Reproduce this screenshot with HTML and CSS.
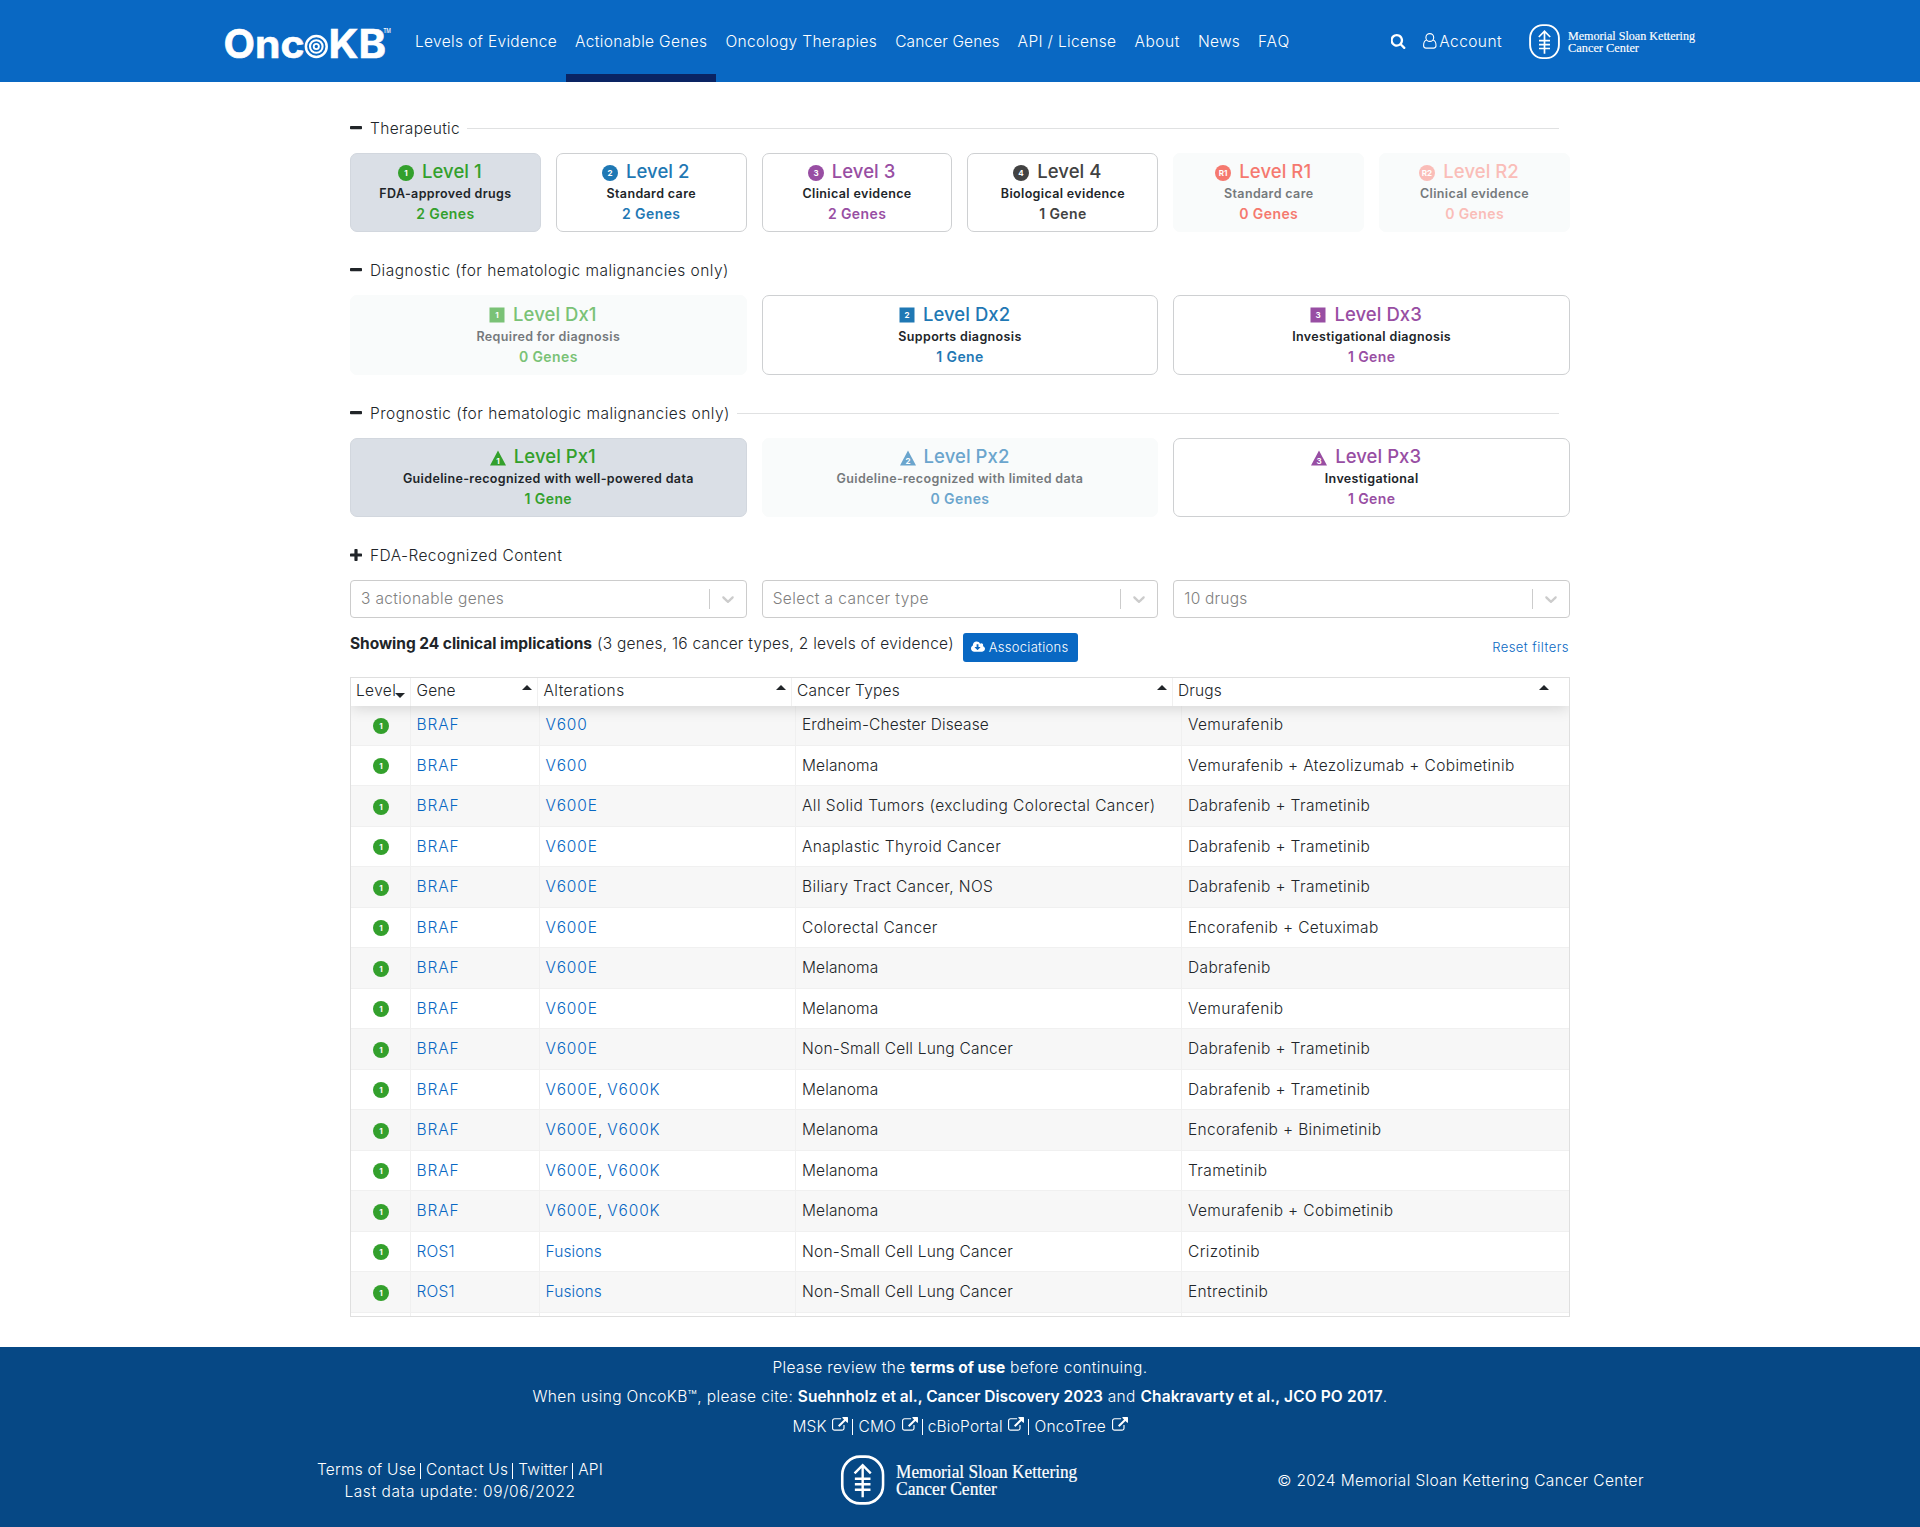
FILE: index.html
```html
<!DOCTYPE html>
<html lang="en">
<head>
<meta charset="utf-8">
<title>OncoKB Actionable Genes</title>
<link rel="stylesheet" href="styles.css">
</head>
<body>
<svg class="defs" width="0" height="0">
  <symbol id="seal" viewBox="0 0 31 36">
    <rect x="1.1" y="1.1" width="28.8" height="33" rx="12.5" ry="13" fill="none" stroke="#fff" stroke-width="1.9"/>
    <path d="M15.5 29.7V7.5M9.8 13l5.7-5.8 5.7 5.8M10 16.7h11M10 20.6h11M10 24.5h11" fill="none" stroke="#fff" stroke-width="1.7"/>
  </symbol>
  <symbol id="ext" viewBox="0 0 1792 1792"><path d="M1408 928v320q0 119-84.500 203.500t-203.500 84.500h-832q-119 0-203.500-84.500t-84.500-203.500v-832q0-119 84.500-203.500t203.500-84.500h704q14 0 23 9t9 23v64q0 14-9 23t-23 9h-704q-66 0-113 47t-47 113v832q0 66 47 113t113 47h832q66 0 113-47t47-113v-320q0-14 9-23t23-9h64q14 0 23 9t9 23zm384-864v512q0 26-19 45t-45 19-45-19l-176-176-652 652q-10 10-23 10t-23-10l-114-114q-10-10-10-23t10-23l652-652-176-176q-19-19-19-45t19-45 45-19h512q26 0 45 19t19 45z"/></symbol>
  <symbol id="minus" viewBox="0 0 12 12"><rect y="4" width="12" height="3.2" rx="0.8"/></symbol>
  <symbol id="plus" viewBox="0 0 12 12"><path d="M.7 4.400h3.700V.7a.7.7 0 0 1 .7-.7h1.800a.7.7 0 0 1 .7.7v3.700h3.700a.7.7 0 0 1 .7.7v1.800a.7.7 0 0 1-.7.7H7.600v3.700a.7.7 0 0 1-.7.7H5.100a.7.7 0 0 1-.7-.7V7.600H.7a.7.7 0 0 1-.7-.7V5.100a.7.7 0 0 1 .7-.7z"/></symbol>
  <symbol id="chev" viewBox="0 0 20 20"><path d="M4.516 7.548c0.436-0.446 1.043-0.481 1.576 0l3.908 3.747 3.908-3.747c0.533-0.481 1.141-0.446 1.574 0 0.436 0.445 0.408 1.197 0 1.615-0.406 0.418-4.695 4.502-4.695 4.502-0.217 0.223-0.502 0.335-0.787 0.335s-0.570-0.112-0.789-0.335c0 0-4.287-4.084-4.695-4.502s-0.436-1.170 0-1.615z"/></symbol>
</svg>

<header class="header">
  <div class="header-in">
    <svg class="logo" width="172" height="62" viewBox="-2 -15 172 62">
      <text x="-.5" y="30.500" class="logo-text" textLength="81" lengthAdjust="spacingAndGlyphs">Onc</text>
      <circle cx="92.300" cy="19.500" r="10.400" fill="none" stroke="#fff" stroke-width="2.500"/>
      <circle cx="92.300" cy="19.500" r="6.300" fill="none" stroke="#fff" stroke-width="2.100"/>
      <circle cx="92.300" cy="19.500" r="2.600" fill="none" stroke="#fff" stroke-width="1.900"/>
      <text x="104.500" y="30.500" class="logo-text" textLength="57.500" lengthAdjust="spacingAndGlyphs">KB</text>
      <text x="159.500" y="5.800" class="logo-tm" textLength="7.500" lengthAdjust="spacingAndGlyphs">TM</text>
    </svg>
    <nav class="nav">
      <a>Levels of Evidence</a><a class="active">Actionable Genes</a><a>Oncology Therapies</a><a class="ls-1">Cancer Genes</a><a class="ls-3">API / License</a><a class="ls-5">About</a><a class="ls-2">News</a><a class="ls-8">FAQ</a>
    </nav>
    <div class="tools">
      <svg class="search" width="15" height="15" viewBox="128 128 1536 1664" fill="#fff"><path d="M1152 832q0-185-131.500-316.500t-316.500-131.500-316.500 131.500-131.500 316.500 131.500 316.500 316.500 131.500 316.500-131.500 131.500-316.500zm512 832q0 52-38 90t-90 38q-54 0-90-38l-343-342q-179 124-399 124-143 0-273.500-55.500t-225-150-150-225-55.500-273.500 55.500-273.500 150-225 225-150 273.500-55.500 273.500 55.500 225 150 150 225 55.500 273.500q0 220-124 399l343 343q37 37 37 90z"/></svg>
      <svg class="user" width="14" height="16" viewBox="0 0 14 16" fill="none" stroke="#fff" stroke-width="1.100"><circle cx="6.800" cy="4.500" r="3.900"/><path d="M3.600 7C1.500 7.600.6 9.800.6 12.500c0 1.600 1 2.600 2.400 2.600h7.600c1.400 0 2.400-1 2.400-2.600 0-2.700-.9-4.900-3-5.500"/></svg>
      <span class="ls-4">Account</span>
      <svg class="msk" width="176" height="36" viewBox="0 0 176 36"><use href="#seal" width="31" height="36"/><text x="39" y="15.8" textLength="127" lengthAdjust="spacingAndGlyphs" class="msk-text">Memorial Sloan Kettering</text><text x="39" y="27.7" textLength="71" lengthAdjust="spacingAndGlyphs" class="msk-text">Cancer Center</text></svg>
    </div>
  </div>
</header>

<main class="main">
  <h2 class="sec"><svg class="tog"><use href="#minus"/></svg><span class="ls-3">Therapeutic</span><i></i></h2>
  <div class="cards six">
    <div class="card on green"><b><svg class="badge" viewBox="0 0 16 16"><circle cx="8" cy="8" r="8"/><text x="8" y="10.800" class="bt">1</text></svg>Level 1</b><p>FDA-approved drugs</p><em>2 Genes</em></div>
    <div class="card blue"><b><svg class="badge" viewBox="0 0 16 16"><circle cx="8" cy="8" r="8"/><text x="8" y="10.800" class="bt">2</text></svg>Level 2</b><p>Standard care</p><em>2 Genes</em></div>
    <div class="card purple"><b><svg class="badge" viewBox="0 0 16 16"><circle cx="8" cy="8" r="8"/><text x="8" y="10.800" class="bt">3</text></svg>Level 3</b><p>Clinical evidence</p><em>2 Genes</em></div>
    <div class="card dark"><b><svg class="badge" viewBox="0 0 16 16"><circle cx="8" cy="8" r="8"/><text x="8" y="10.800" class="bt">4</text></svg>Level 4</b><p>Biological evidence</p><em>1 Gene</em></div>
    <div class="card off r1"><b><svg class="badge" viewBox="0 0 16 16"><circle cx="8" cy="8" r="8"/><text x="8" y="10.600" class="bt">R1</text></svg>Level R1</b><p>Standard care</p><em>0 Genes</em></div>
    <div class="card off r2"><b><svg class="badge" viewBox="0 0 16 16"><circle cx="8" cy="8" r="8"/><text x="8" y="10.600" class="bt">R2</text></svg>Level R2</b><p>Clinical evidence</p><em>0 Genes</em></div>
  </div>

  <h2 class="sec"><svg class="tog"><use href="#minus"/></svg><span>Diagnostic (for hematologic malignancies only)</span></h2>
  <div class="cards tall">
    <div class="card off green"><b><svg class="badge" viewBox="0 0 16 16"><rect x=".5" y=".5" width="15" height="15"/><text x="8" y="10.800" class="bt">1</text></svg>Level Dx1</b><p>Required for diagnosis</p><em>0 Genes</em></div>
    <div class="card blue"><b><svg class="badge" viewBox="0 0 16 16"><rect x=".5" y=".5" width="15" height="15"/><text x="8" y="10.800" class="bt">2</text></svg>Level Dx2</b><p>Supports diagnosis</p><em>1 Gene</em></div>
    <div class="card purple"><b><svg class="badge" viewBox="0 0 16 16"><rect x=".5" y=".5" width="15" height="15"/><text x="8" y="10.800" class="bt">3</text></svg>Level Dx3</b><p>Investigational diagnosis</p><em>1 Gene</em></div>
  </div>

  <h2 class="sec"><svg class="tog"><use href="#minus"/></svg><span>Prognostic (for hematologic malignancies only)</span><i></i></h2>
  <div class="cards">
    <div class="card on green"><b><svg class="badge" viewBox="0 0 16 16"><path d="M8 .5l8 15H0z"/><text x="8" y="13.500" class="bt">1</text></svg>Level Px1</b><p>Guideline-recognized with well-powered data</p><em>1 Gene</em></div>
    <div class="card off blue"><b><svg class="badge" viewBox="0 0 16 16"><path d="M8 .5l8 15H0z"/><text x="8" y="13.500" class="bt">2</text></svg>Level Px2</b><p>Guideline-recognized with limited data</p><em>0 Genes</em></div>
    <div class="card purple"><b><svg class="badge" viewBox="0 0 16 16"><path d="M8 .5l8 15H0z"/><text x="8" y="13.500" class="bt">3</text></svg>Level Px3</b><p>Investigational</p><em>1 Gene</em></div>
  </div>

  <h2 class="sec"><svg class="tog"><use href="#plus"/></svg><span class="ls-4">FDA-Recognized Content</span></h2>
  <div class="selects">
    <div class="select"><span>3 actionable genes</span><s></s><svg><use href="#chev"/></svg></div>
    <div class="select"><span class="ls-4">Select a cancer type</span><s></s><svg><use href="#chev"/></svg></div>
    <div class="select"><span class="ls-2">10 drugs</span><s></s><svg><use href="#chev"/></svg></div>
  </div>

  <div class="summary">
    <strong>Showing 24 clinical implications</strong><span>(3 genes, 16 cancer types, 2 levels of evidence)</span>
    <button><svg width="14" height="12" viewBox="-64 256 1920 1280" fill="#fff"><path d="M1216 928q0-14-9-23t-23-9h-224v-352q0-13-9.500-22.500t-22.500-9.500h-192q-13 0-22.500 9.500t-9.500 22.500v352h-224q-13 0-22.500 9.500t-9.500 22.500q0 14 9 23l352 352q9 9 23 9t23-9l351-351q10-12 10-24zm640 224q0 159-112.500 271.500t-271.500 112.500h-1088q-185 0-316.500-131.500t-131.500-316.500q0-130 70-240t188-165q-2-30-2-43 0-212 150-362t362-150q156 0 285.500 87t188.500 231q71-62 166-62 106 0 181 75t75 181q0 76-41 138 130 31 213.500 135.500t83.500 238.500z"/></svg>Associations</button>
    <a>Reset filters</a>
  </div>

  <div class="table">
    <div class="thead">
      <div>Level<u class="down"></u></div><div class="ls-1">Gene<u></u></div><div class="ls-4">Alterations<u></u></div><div class="ls-2">Cancer Types<u></u></div><div class="ls-1">Drugs<u></u></div>
    </div>
    <div class="row"><div><span class="dot">1</span></div><div><a>BRAF</a></div><div><a>V600</a></div><div class="ls-1">Erdheim-Chester Disease</div><div>Vemurafenib</div></div>
    <div class="row"><div><span class="dot">1</span></div><div><a>BRAF</a></div><div><a>V600</a></div><div class="ls-1">Melanoma</div><div>Vemurafenib + Atezolizumab + Cobimetinib</div></div>
    <div class="row"><div><span class="dot">1</span></div><div><a>BRAF</a></div><div><a>V600E</a></div><div class="ls-4">All Solid Tumors (excluding Colorectal Cancer)</div><div>Dabrafenib + Trametinib</div></div>
    <div class="row"><div><span class="dot">1</span></div><div><a>BRAF</a></div><div><a>V600E</a></div><div>Anaplastic Thyroid Cancer</div><div>Dabrafenib + Trametinib</div></div>
    <div class="row"><div><span class="dot">1</span></div><div><a>BRAF</a></div><div><a>V600E</a></div><div>Biliary Tract Cancer, NOS</div><div>Dabrafenib + Trametinib</div></div>
    <div class="row"><div><span class="dot">1</span></div><div><a>BRAF</a></div><div><a>V600E</a></div><div>Colorectal Cancer</div><div>Encorafenib + Cetuximab</div></div>
    <div class="row"><div><span class="dot">1</span></div><div><a>BRAF</a></div><div><a>V600E</a></div><div class="ls-1">Melanoma</div><div>Dabrafenib</div></div>
    <div class="row"><div><span class="dot">1</span></div><div><a>BRAF</a></div><div><a>V600E</a></div><div class="ls-1">Melanoma</div><div>Vemurafenib</div></div>
    <div class="row"><div><span class="dot">1</span></div><div><a>BRAF</a></div><div><a>V600E</a></div><div class="ls-2">Non-Small Cell Lung Cancer</div><div>Dabrafenib + Trametinib</div></div>
    <div class="row"><div><span class="dot">1</span></div><div><a>BRAF</a></div><div><a>V600E</a>, <a>V600K</a></div><div class="ls-1">Melanoma</div><div>Dabrafenib + Trametinib</div></div>
    <div class="row"><div><span class="dot">1</span></div><div><a>BRAF</a></div><div><a>V600E</a>, <a>V600K</a></div><div class="ls-1">Melanoma</div><div>Encorafenib + Binimetinib</div></div>
    <div class="row"><div><span class="dot">1</span></div><div><a>BRAF</a></div><div><a>V600E</a>, <a>V600K</a></div><div class="ls-1">Melanoma</div><div>Trametinib</div></div>
    <div class="row"><div><span class="dot">1</span></div><div><a>BRAF</a></div><div><a>V600E</a>, <a>V600K</a></div><div class="ls-1">Melanoma</div><div>Vemurafenib + Cobimetinib</div></div>
    <div class="row"><div><span class="dot">1</span></div><div><a class="ls-2">ROS1</a></div><div><a class="ls-1">Fusions</a></div><div class="ls-2">Non-Small Cell Lung Cancer</div><div>Crizotinib</div></div>
    <div class="row"><div><span class="dot">1</span></div><div><a class="ls-2">ROS1</a></div><div><a class="ls-1">Fusions</a></div><div class="ls-2">Non-Small Cell Lung Cancer</div><div>Entrectinib</div></div>
    <div class="row"><div></div><div></div><div></div><div></div><div></div></div>
  </div>
</main>

<footer class="footer">
  <div class="fl">Please review the <strong>terms of use</strong> before continuing.</div>
  <div class="fl">When using OncoKB™, please cite: <b>Suehnholz et al., Cancer Discovery 2023</b> and <b class="ls-1">Chakravarty et al., JCO PO 2017</b>.</div>
  <div class="fl links"><a>MSK <svg><use href="#ext"/></svg></a><a>CMO <svg><use href="#ext"/></svg></a><a>cBioPortal <svg><use href="#ext"/></svg></a><a>OncoTree <svg><use href="#ext"/></svg></a></div>
  <div class="fcols">
    <div class="fleft"><div class="flinks"><a>Terms of Use</a><a>Contact Us</a><a>Twitter</a><a>API</a></div><div class="ls-5">Last data update: 09/06/2022</div></div>
    <svg class="fmsk" width="260" height="52" viewBox="-7.5 0 183 36.6"><use href="#seal" width="31" height="36"/><text x="39" y="16.300" textLength="127.500" lengthAdjust="spacingAndGlyphs" class="msk-text">Memorial Sloan Kettering</text><text x="39" y="28.200" textLength="71" lengthAdjust="spacingAndGlyphs" class="msk-text">Cancer Center</text></svg>
    <div class="fright">© 2024 Memorial Sloan Kettering Cancer Center</div>
  </div>
</footer>
</body>
</html>
```
FILE: styles.css
```css
*{box-sizing:border-box}
body{margin:0;background:#fff;color:#212529;font-family:"Inter","Liberation Sans",sans-serif;font-size:15.5px;font-weight:350;letter-spacing:.36px;line-height:24px}
.defs{position:absolute}
a{color:#0968c3;text-decoration:none}
.ls-1{letter-spacing:.11px !important}
.ls-2{letter-spacing:.22px !important}
.ls-3{letter-spacing:.33px !important}
.ls-4{letter-spacing:.42px !important}
.ls-5{letter-spacing:.58px !important}
.ls-8{letter-spacing:.9px !important}

/* header */
.header{height:82px;background:#0968c3;color:#fff}
.header-in{width:1474px;height:82px;margin-left:222px;display:flex}
.logo{margin-top:12px;flex:none}
.logo-text{font:700 39px "Inter",sans-serif;letter-spacing:0;fill:#fff;stroke:#fff;stroke-width:.6px}
.logo-tm{font:600 7px "Open Sans",sans-serif;letter-spacing:0;fill:#fff}
.nav{display:flex;margin-left:12px;letter-spacing:.33px}
.nav a{padding:30px 9px 0;height:82px;color:#fff;white-space:nowrap}
.nav .active{border-bottom:8px solid #0a2463}
.tools{margin-left:auto;display:flex;align-items:flex-start;padding-top:30px}
.search{margin:4px 17px 0 0}
.user{margin:3px 2px 0 0}
.msk{margin:-6px -9px 0 27px}
.msk-text{font:12.6px "Liberation Serif",serif;letter-spacing:0;fill:#fff;stroke:#fff;stroke-width:.15px}

/* page body */
.main{width:1220px;margin:0 auto;height:1265px;padding-top:34px}
.sec{display:flex;align-items:center;margin:0 0 13px;height:24px;font-size:15.5px;font-weight:350;letter-spacing:.47px}
.sec span{padding-top:1px}
.tog{width:12px;height:12px;margin:-1px 8px 0 0;fill:#212529}
.sec i{flex:1;height:1px;margin:1px 11px 0 7px;background:#e0e1e2}
.cards{display:grid;grid-template-columns:repeat(3,1fr);gap:15px;height:79px;margin-bottom:26px}
.cards.six{grid-template-columns:repeat(6,1fr)}
.cards.tall{height:80px}
.card{border:1px solid #ced0d2;border-radius:7px;text-align:center;padding-top:5px;fill:currentColor}
.tall .card{padding-top:6px}
.tall .badge{margin-top:5px}
.card.on{background:#dadfe6;border-color:#d2d7de}
.card.off{background:#f9fbfb;border-color:#f9fbfb}
.card b{display:flex;justify-content:center;height:24px;line-height:24px;padding-right:11px;font-size:18.5px;font-weight:500;letter-spacing:.05px}
.badge{width:16px;height:16px;margin:6px 8px 0 0;flex:none}
.bt{font:700 8px "Inter",sans-serif;letter-spacing:0;fill:#fff;text-anchor:middle}
.card p{margin:0;height:21px;line-height:21px;font-size:12.5px;font-weight:600;letter-spacing:.36px;color:#212529}
.card em{display:block;height:20px;line-height:20px;font-size:14px;font-style:normal;font-weight:600;letter-spacing:.4px}
.green{color:#33a02c}
.blue{color:#1f78b4}
.purple{color:#984ea3}
.dark{color:#424242}
.off p{color:#75797c}
.off.green{color:#7ac276}
.off.blue{color:#6ba5cd}
.off.r1{color:#f5796f}
.off.r2{color:#fabdb8}

.selects{display:grid;grid-template-columns:repeat(3,1fr);gap:15px}
.select{height:38px;border:1px solid #ccc;border-radius:4px;display:flex;align-items:center;padding-left:10px;color:#808080}
.select span{flex:1;margin-top:-1px}
.select s{width:1px;height:20px;background:#ccc}
.select svg{width:20px;height:20px;margin:0 8px;fill:#ccc}

.summary{display:flex;height:59px;padding-top:14px}
.summary strong{font-weight:700;letter-spacing:-.04px;margin-right:5px}
.summary span{letter-spacing:.26px}
.summary button{width:115px;height:29px;margin:1px auto 0 9px;border:0;border-radius:3px;background:#0968c3;color:#fff;font:350 13px "Inter",sans-serif;letter-spacing:.28px;display:flex;align-items:center;padding:0 0 1px 8px}
.summary button svg{margin-right:4px}
.summary a{margin:3px 1px 0 0;font-size:13px;letter-spacing:.46px}

.table{height:640px;border:1px solid #dfdfdf;overflow:hidden}
.thead{display:grid;grid-template-columns:59.5px 127px 254.5px 381px 1fr;height:28px;margin-bottom:-1px;position:relative;z-index:1;box-shadow:0 2px 15px rgba(0,0,0,.15)}
.thead>div{position:relative;background:#fff;padding:1px 0 0 5px;border-right:1px solid #f0f0f0}
.thead>div:nth-child(2),.thead>div:nth-child(3){padding-left:6px}
.thead>div:last-child{border:0}
.thead u{position:absolute;right:5px;top:7px;border:5px solid transparent;border-top:0;border-bottom-color:#212529}
.thead>div:last-child u{right:20px}
.thead .down{top:15px;right:5px;border-top:5px solid #212529;border-bottom:0}
.row{display:grid;grid-template-columns:59.5px 129px 256.5px 386px 1fr;height:40.5px;line-height:39px;border-bottom:1px solid #f0f0f0}
.row:nth-child(even){background:#f7f7f7}
.row>div{padding-left:6px;border-right:1px solid #f0f0f0;white-space:nowrap}
.row>div:last-child{border:0}
.row>div:first-child{padding:12.5px 0 0 22px}
.dot{display:block;width:16px;height:16px;border-radius:50%;background:#33a02c;color:#fff;font:700 8px/16px "Inter",sans-serif;letter-spacing:0;text-align:center}
.row a{letter-spacing:.88px}

/* footer */
.footer{height:180px;background:#064885;color:#fff;text-align:center;padding-top:8.5px}
.footer a{color:#fff}
.footer strong{font-weight:700;letter-spacing:.03px}
.footer b{font-weight:600;letter-spacing:0}
.fl{height:24px;margin-bottom:5.5px}
.links,.flinks{display:flex;justify-content:center;letter-spacing:.22px}
.links a,.flinks a{display:flex;line-height:24px;white-space:pre}
.links svg{width:16px;height:16px;fill:#fff;margin:2px 0 0 1px}
.links a+a,.flinks a+a{margin-left:4px}
.links a+a::before,.flinks a+a::before{content:"";width:1px;height:16px;margin:4px 5px 0 0;background:#fff}
.fcols{display:grid;grid-template-columns:1fr 300px 1fr;line-height:22px;align-items:center;height:60px;margin-top:12.5px}
.flinks{height:22px}
.flinks a{line-height:22px}
.fleft{padding-left:110px}
.fright{padding-right:109px}
.fmsk{display:block;margin:0 auto}
```
